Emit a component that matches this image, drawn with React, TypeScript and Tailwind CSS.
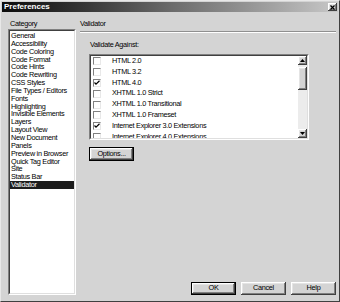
import React from 'react';

const categories = [
  'General',
  'Accessibility',
  'Code Coloring',
  'Code Format',
  'Code Hints',
  'Code Rewriting',
  'CSS Styles',
  'File Types / Editors',
  'Fonts',
  'Highlighting',
  'Invisible Elements',
  'Layers',
  'Layout View',
  'New Document',
  'Panels',
  'Preview in Browser',
  'Quick Tag Editor',
  'Site',
  'Status Bar',
  'Validator',
];

const validators = [
  { label: 'HTML 2.0', checked: false },
  { label: 'HTML 3.2', checked: false },
  { label: 'HTML 4.0', checked: true },
  { label: 'XHTML 1.0 Strict', checked: false },
  { label: 'XHTML 1.0 Transitional', checked: false },
  { label: 'XHTML 1.0 Frameset', checked: false },
  { label: 'Internet Explorer 3.0 Extensions', checked: true },
  { label: 'Internet Explorer 4.0 Extensions', checked: false },
];

const raised =
  'bg-[#d4d4d4] shadow-[inset_-1px_-1px_#404040,inset_1px_1px_#ffffff,inset_-2px_-2px_#808080,inset_2px_2px_#e4e4e4]';

const Button = ({ label, isDefault }: { label: string; isDefault?: boolean }) => (
  <div className={`h-[13px] w-[45px] ${isDefault ? 'border border-black' : ''}`}>
    <div className={`h-full w-full flex items-center justify-center ${raised}`}>{label}</div>
  </div>
);

const Sunken = ({ className, children }: { className: string; children: React.ReactNode }) => (
  <div className={`border border-t-[#808080] border-l-[#808080] border-b-white border-r-white ${className}`}>
    <div className="h-full w-full border border-t-[#404040] border-l-[#404040] border-b-[#dfdfdf] border-r-[#dfdfdf] bg-white overflow-hidden">
      {children}
    </div>
  </div>
);

const Check = ({ checked }: { checked: boolean }) => (
  <div className="w-[8px] h-[8px] border border-t-[#808080] border-l-[#808080] border-b-[#e8e8e8] border-r-[#e8e8e8] bg-white flex items-center justify-center">
    {checked && (
      <svg width="6" height="6" viewBox="0 0 6 6">
        <polyline points="0.5,2.5 2,4.2 5.5,0.8" fill="none" stroke="#000" strokeWidth="1.2" />
      </svg>
    )}
  </div>
);

const Arrow = ({ up }: { up?: boolean }) => (
  <div className={`h-[9px] w-[9px] flex items-center justify-center ${raised}`}>
    <svg width="5" height="3" viewBox="0 0 5 3">
      <polygon points={up ? '2.5,0 5,3 0,3' : '0,0 5,0 2.5,3'} fill="#000" />
    </svg>
  </div>
);

export default function App() {
  return (
    <div
      className="w-[340px] h-[302px] bg-[#d4d4d4] border border-t-[#e8e8e8] border-l-[#e8e8e8] border-b-[#404040] border-r-[#404040] flex flex-col text-[7.3px] tracking-[-0.3px] text-black select-none"
      style={{ fontFamily: '"Liberation Sans", Arial, sans-serif' }}
    >
      <div className="h-[10px] mx-[1px] mt-[1px] bg-linear-to-r from-[#0c0c0c] via-[#6a6a6a] to-[#c8c8c8] flex items-center justify-between pl-[2px] pr-[1px]">
        <span className="font-bold text-white text-[8px] tracking-normal leading-none">Preferences</span>
        <div className={`h-[8px] w-[9px] flex items-center justify-center ${raised}`}>
          <svg width="5" height="5" viewBox="0 0 5 5">
            <path d="M0.5 0.5 L4.5 4.5 M4.5 0.5 L0.5 4.5" stroke="#000" strokeWidth="1.2" />
          </svg>
        </div>
      </div>

      <div className="flex-1 flex pt-[8px] pb-[6px] pl-[7px] pr-[3px] gap-[4px]">
        <div className="w-[68px] flex flex-col">
          <div className="h-[8px] leading-[8px] pl-[2px]">Category</div>
          <Sunken className="mt-[1px] flex-1">
            <div className="pt-[1px]">
              {categories.map((c) => (
                <div
                  key={c}
                  className={`h-[7.85px] leading-[7.85px] pl-[1px] whitespace-nowrap ${
                    c === 'Validator' ? 'bg-[#1c1c1c] text-white' : ''
                  }`}
                >
                  {c}
                </div>
              ))}
            </div>
          </Sunken>
        </div>

        <div className="flex-1 flex flex-col">
          <div className="h-[8px] leading-[8px]">Validator</div>
          <div className="mt-[3px] h-[2px] border-t border-t-[#909090] border-b border-b-white" />
          <div className="mt-[8px] pl-[10px] h-[8px] leading-[8px]">Validate Against:</div>
          <Sunken className="mt-[5px] ml-[9px] w-[220px] h-[86px]">
            <div className="flex h-full">
              <div className="flex-1">
                {validators.map((v) => (
                  <div key={v.label} className="h-[10.8px] flex items-center pl-[2px]">
                    <Check checked={v.checked} />
                    <span className="ml-[11px] whitespace-nowrap">{v.label}</span>
                  </div>
                ))}
              </div>
              <div className="w-[9px] bg-[#ececec] flex flex-col">
                <Arrow up />
                <div className="h-[2px]" />
                <div className={`h-[23px] ${raised}`} />
                <div className="flex-1" />
                <Arrow />
              </div>
            </div>
          </Sunken>
          <div className="mt-[7px] ml-[9px] h-[14px] w-[45px] border border-black">
            <div className={`h-full w-full flex items-center justify-center ${raised}`}>Options...</div>
          </div>
          <div className="flex-1" />
          <div className="flex justify-end gap-[5px]">
            <Button label="OK" isDefault />
            <Button label="Cancel" />
            <Button label="Help" />
          </div>
        </div>
      </div>
    </div>
  );
}
